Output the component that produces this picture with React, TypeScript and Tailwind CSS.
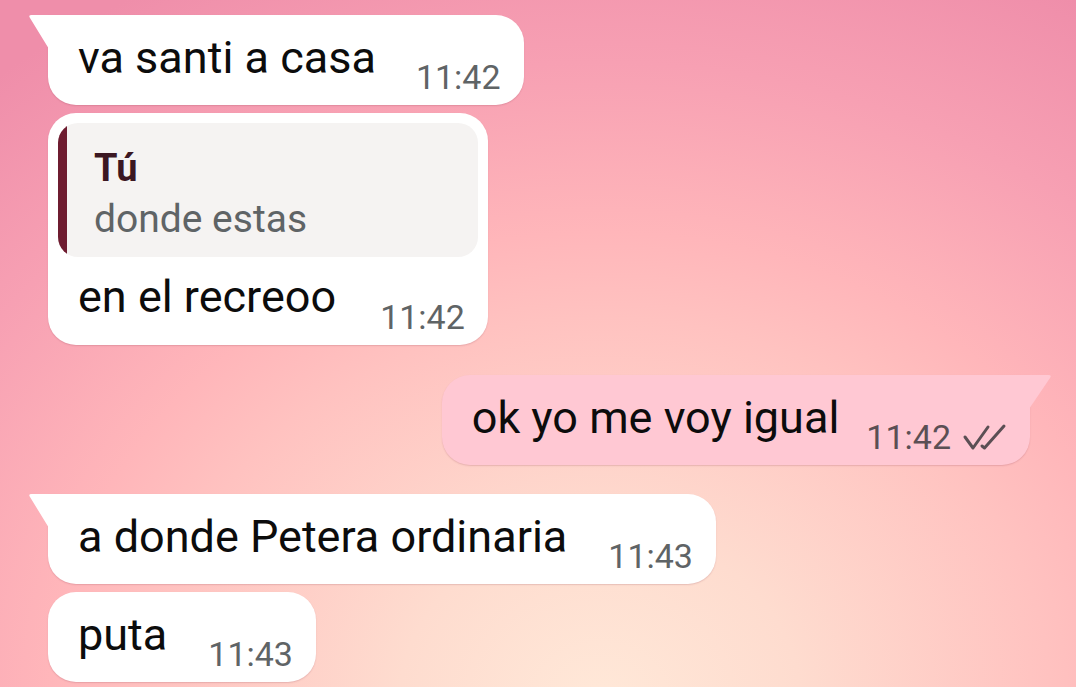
import React from 'react'

type Side = 'in' | 'out'

function Tail({ side }: { side: Side }) {
  if (side === 'in') {
    return (
      <svg className="absolute left-[-20px] top-0" width="21" height="34" viewBox="0 0 21 34">
        <path d="M21 0 H3.5 Q0 0 2 3 L21 34 Z" fill="#ffffff" />
      </svg>
    )
  }
  return (
    <svg className="absolute right-[-22px] top-0" width="23" height="34" viewBox="0 0 23 34">
      <path d="M0 0 H19.5 Q23 0 21 3 L0 34 Z" fill="#ffc8d3" />
    </svg>
  )
}

function Checks() {
  return (
    <svg width="46" height="28" viewBox="0 0 46 28" className="ml-[10px] mt-[-1px]" fill="none">
      <path d="M4 14 L12 25 L27 4" stroke="#5b4f54" strokeWidth="3" strokeLinecap="round" strokeLinejoin="round" />
      <path d="M21 23 L23.5 25 L43 3" stroke="#5b4f54" strokeWidth="3" strokeLinecap="round" strokeLinejoin="round" />
    </svg>
  )
}

function Row({ text, time, gap, read, tight }: { text: string; time: string; gap: string; read?: boolean; tight?: boolean }) {
  return (
    <div className={`flex items-start ${tight ? 'h-[88px]' : 'h-[90px]'} pl-[30px] pr-[23px]`}>
      <span className={`${tight ? 'mt-[14px]' : 'mt-[17px]'} text-[45px] leading-[52px] text-[#0c0c0c] whitespace-nowrap`}>{text}</span>
      <span className={`${gap} ${tight ? 'mt-[43px]' : 'mt-[45px]'} flex items-center text-[34px] leading-[34px] whitespace-nowrap ${read ? 'text-[#5b4f54]' : 'text-[#5f6466]'}`}>
        {time}
        {read && <Checks />}
      </span>
    </div>
  )
}

function Bubble({ side, tail, children, className = '' }: { side: Side; tail?: boolean; children: React.ReactNode; className?: string }) {
  const color = side === 'in' ? 'bg-white' : 'bg-[#ffc8d3]'
  const corner = tail ? (side === 'in' ? 'rounded-tl-none' : 'rounded-tr-none') : ''
  return (
    <div className={`relative w-fit rounded-[28px] ${corner} ${color} shadow-[0_1px_1.5px_rgba(120,40,60,0.18)] ${className}`}>
      {tail && <Tail side={side} />}
      {children}
    </div>
  )
}

export default function App() {
  return (
    <div className="relative h-[687px] w-[1076px] overflow-hidden font-['Roboto',sans-serif] bg-[radial-gradient(ellipse_1000px_850px_at_600px_700px,#ffe8d8_0%,#fedccf_20%,#ffc2c0_45%,#ffb6ba_55%,#f7a0b3_75%,#ef8eaa_95%)]">
      <div className="flex flex-col pt-[15px]">
        <Bubble side="in" tail className="ml-[48px]">
          <Row text="va santi a casa" time="11:42" gap="ml-[40px]" />
        </Bubble>

        <Bubble side="in" className="ml-[48px] mt-[8px]">
          <div className="px-[10px] pt-[10px]">
            <div className="flex overflow-hidden rounded-[20px] bg-[#f5f3f2]">
              <div className="w-[9px] shrink-0 bg-[#6e1c30]" />
              <div className="pl-[27px] pt-[25px] pb-[18px]">
                <div className="text-[38px] font-bold leading-[40px] text-[#3b1722]">Tú</div>
                <div className="mt-[11px] text-[39px] leading-[40px] text-[#5f6466]">donde estas</div>
              </div>
            </div>
          </div>
          <Row text="en el recreoo" time="11:42" gap="ml-[44px]" tight />
        </Bubble>

        <Bubble side="out" tail className="mr-[46px] mt-[30px] self-end">
          <Row text="ok yo me voy igual" time="11:42" gap="ml-[27px]" read />
        </Bubble>

        <Bubble side="in" tail className="ml-[48px] mt-[29px]">
          <Row text="a donde Petera ordinaria" time="11:43" gap="ml-[41px]" />
        </Bubble>

        <Bubble side="in" className="ml-[48px] mt-[8px]">
          <Row text="puta" time="11:43" gap="ml-[41px]" />
        </Bubble>
      </div>
    </div>
  )
}
